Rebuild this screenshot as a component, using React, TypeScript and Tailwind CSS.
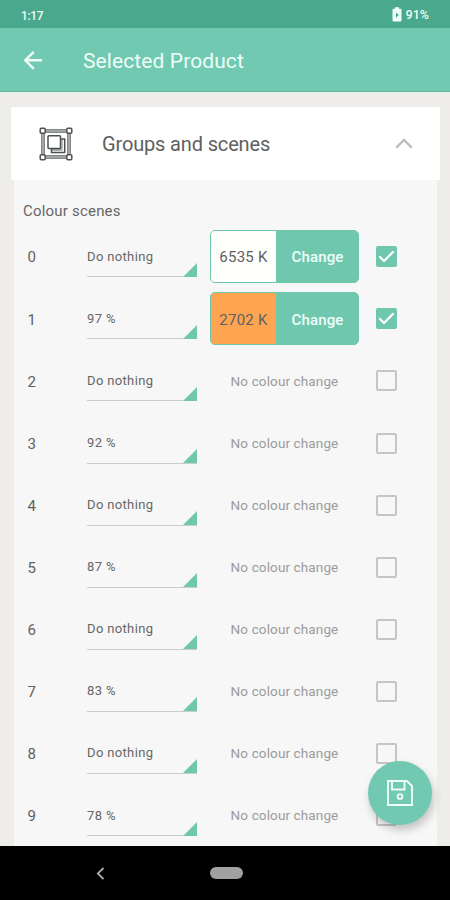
import React from "react";

type Scene = { id: number; level: string; kelvin?: string; swatch?: string };

const scenes: Scene[] = [
  { id: 0, level: "Do nothing", kelvin: "6535 K", swatch: "bg-[#fffffc]" },
  { id: 1, level: "97 %", kelvin: "2702 K", swatch: "bg-[#ffa552]" },
  { id: 2, level: "Do nothing" },
  { id: 3, level: "92 %" },
  { id: 4, level: "Do nothing" },
  { id: 5, level: "87 %" },
  { id: 6, level: "Do nothing" },
  { id: 7, level: "83 %" },
  { id: 8, level: "Do nothing" },
  { id: 9, level: "78 %" },
];

function StatusBar() {
  return (
    <div className="flex h-7 shrink-0 items-center justify-between bg-[#4aa88c] pr-[21px] pl-[21px] text-[12px] font-medium text-[#effdf8]">
      <span className="mt-[3px] tracking-[-0.35px]">1:17</span>
      <span className="mt-[1px] flex items-center gap-[4px]">
        <svg width="10" height="15" viewBox="0 0 10 15">
          <path d="M3 0.300h4v1.500h1.500a1 1 0 0 1 1 1V13.500a1 1 0 0 1-1 1h-7a1 1 0 0 1-1-1V2.800a1 1 0 0 1 1-1H3z" fill="#effdf8" />
          <path d="M4 5.500 6.800 8 4 10.800z" fill="#4aa88c" />
        </svg>
        <span className="mt-px text-[12.500px]">91%</span>
      </span>
    </div>
  );
}

function GroupIcon() {
  return (
    <svg width="34" height="34" viewBox="0 0 34 34" fill="none" stroke="#4b4f51" strokeWidth="1.500">
      <rect x="4" y="4" width="26" height="26" stroke="#686b6d" strokeWidth="3.600" />
      <rect x="4" y="4" width="26" height="26" stroke="#c9cacb" strokeWidth="1.200" />
      <g fill="#fff">
        <rect x="1.200" y="1.200" width="5" height="5" rx="1" />
        <rect x="27.800" y="1.200" width="5" height="5" rx="1" />
        <rect x="1.200" y="27.800" width="5" height="5" rx="1" />
        <rect x="27.800" y="27.800" width="5" height="5" rx="1" />
      </g>
      <path d="M21.500 12h4.200v13.500H12.500v-3.700h9z" fill="#fff" />
      <path d="M23.200 12.500v10.800H13" stroke="#9a9c9d" strokeWidth="1" />
      <rect x="9" y="8.800" width="12.500" height="12.700" rx="1" fill="#fff" />
    </svg>
  );
}

function Checkbox({ checked }: { checked: boolean }) {
  return checked ? (
    <span className="flex size-[21px] items-center justify-center rounded-[2px] bg-[#6fc8ae]">
      <svg width="17" height="13" viewBox="0 0 17 13" fill="none" stroke="#fff" strokeWidth="2.200">
        <path d="M1.200 6.300 6 11 15.600 1.400" />
      </svg>
    </span>
  ) : (
    <span className="block size-[21px] rounded-[2px] border-2 border-[#c5c5c5]" />
  );
}

function SceneRow({ scene }: { scene: Scene }) {
  return (
    <div className="flex h-[62.1px] shrink-0 items-center">
      <span className="ml-[13.500px] w-[59.500px] pt-[2px] text-[15px] text-[#606060]">{scene.id}</span>
      <div className="flex h-[41px] w-[110px] items-start justify-between border-b border-[#cbcccc]">
        <span className="mt-[10.500px] text-[13px] tracking-[0.35px] whitespace-nowrap text-[#666]">{scene.level}</span>
        <svg className="mt-[26.500px] shrink-0" width="14" height="14" viewBox="0 0 14 14">
          <path d="M14 0v14H0z" fill="#6fc8ae" />
        </svg>
      </div>
      {scene.kelvin ? (
        <div className="ml-[13px] flex h-[53px] w-[149px] overflow-hidden rounded-[5px] border-[1.500px] border-[#6fc8ae] bg-[#6fc8ae]">
          <span className={`flex w-[65px] items-center justify-center pt-[2px] text-[15px] tracking-[0.3px] whitespace-nowrap text-[#606060] ${scene.swatch}`}>
            {scene.kelvin}
          </span>
          <span className="flex flex-1 items-center justify-center pt-[2px] pl-px text-[15px] font-medium tracking-[0.15px] text-[#effdf8]">Change</span>
        </div>
      ) : (
        <span className="ml-[13px] w-[149px] text-center text-[13.500px] tracking-[0.12px] whitespace-nowrap text-[#9b9b9b]">No colour change</span>
      )}
      <span className="ml-[17px]">
        <Checkbox checked={!!scene.kelvin} />
      </span>
    </div>
  );
}

export default function App() {
  return (
    <div className="relative flex h-[900px] w-[450px] flex-col overflow-hidden bg-[#eeede9] font-['Roboto',sans-serif]">
      <StatusBar />
      <header className="flex h-16 shrink-0 items-center border-b border-[#65b9a0] bg-[#70c9b0] pl-[23px] text-[#effdf8]">
        <svg width="20" height="20" viewBox="0 0 20 20" fill="none" stroke="currentColor" strokeWidth="2.500">
          <path d="M19 10.300H2.500M10.800 1.800 2.300 10.300l8.500 8.500" />
        </svg>
        <h1 className="mt-[4px] ml-10 text-[21px] tracking-[0.1px] whitespace-nowrap">Selected Product</h1>
      </header>
      <main className="flex h-[754px] shrink-0 flex-col overflow-hidden pt-[15px]">
        <section className="mr-[10px] ml-[11px] flex h-[73px] shrink-0 items-center rounded-t-[2px] bg-white pr-[27px] pl-[28px]">
          <GroupIcon />
          <h2 className="ml-[29px] flex-1 text-[20px] tracking-[-0.15px] whitespace-nowrap text-[#606060]">Groups and scenes</h2>
          <svg width="18" height="11" viewBox="0 0 18 11" fill="none" stroke="#bdbdbd" strokeWidth="2.300">
            <path d="M1.200 9.700 9 1.900l7.800 7.800" />
          </svg>
        </section>
        <section className="mr-[13px] ml-[14px] flex flex-1 flex-col overflow-hidden bg-[#f7f7f7]">
          <h3 className="flex h-[45.700px] shrink-0 items-end pb-[3px] pl-[9px] text-[15px] tracking-[0.2px] text-[#666]">
            <span>Colour scenes</span>
          </h3>
          {scenes.map((scene) => (
            <SceneRow key={scene.id} scene={scene} />
          ))}
        </section>
      </main>
      <nav className="flex h-[54px] shrink-0 items-center bg-black pl-[96px]">
        <svg width="9" height="13" viewBox="0 0 9 13" fill="none" stroke="#aaa" strokeWidth="1.800">
          <path d="M7.500 1 1.800 6.500l5.700 5.500" />
        </svg>
        <span className="ml-[104.500px] h-3 w-[33px] rounded-full bg-[#a1a1a1]" />
      </nav>
      <button className="absolute top-[761px] left-[368px] flex size-16 items-center justify-center rounded-full bg-[#70c9b0] shadow-[2px_5px_8px_rgba(0,0,0,0.22)]">
        <svg width="28" height="28" viewBox="0 0 28 28" fill="none" stroke="#effdf8" strokeWidth="1.900">
          <path d="M2 2h19l5 5v19H2zM6 2v8.500h12.500V2" />
          <circle cx="14" cy="17.500" r="2.400" />
        </svg>
      </button>
    </div>
  );
}
